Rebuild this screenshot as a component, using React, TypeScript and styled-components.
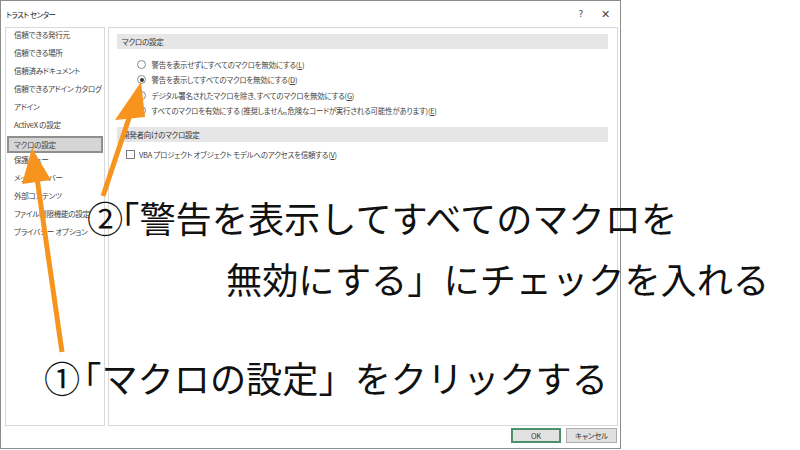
import styled, { createGlobalStyle } from "styled-components";

const GlobalStyle = createGlobalStyle`
	html, body {
		margin: 0;
		padding: 0;
		background: #ffffff;
	}
	#root {
		width: 800px;
		height: 450px;
		overflow: hidden;
	}
`;

const uiFont = `"Noto Sans CJK JP", "Noto Sans", sans-serif`;

const Stage = styled.div`
	position: relative;
	width: 800px;
	height: 450px;
	background: #ffffff;
	font-family: ${uiFont};
`;

const Dialog = styled.div`
	box-sizing: border-box;
	width: 621px;
	height: 449px;
	border: 1px solid #8c8c8c;
	background: #ffffff;
	display: flex;
	flex-direction: column;
	font-size: 7.5px;
	letter-spacing: -0.25px;
	font-feature-settings: "palt";
	color: #333333;
`;

const TitleBar = styled.div`
	flex: none;
	height: 26px;
	display: flex;
	align-items: center;
	padding: 0 10px 0 5px;
	gap: 18px;
	span:first-child {
		flex: 1;
		color: #1a1a1a;
		letter-spacing: -0.5px;
	}
`;

const TitleButton = styled.span`
	font-family: "DejaVu Sans", sans-serif;
	font-size: ${props => props.$size}px;
	color: #444444;
	line-height: 1;
`;

const Body = styled.div`
	flex: none;
	height: 399px;
	display: flex;
	gap: 3px;
	padding: 0 2px 0 4px;
`;

const NavPanel = styled.div`
	box-sizing: border-box;
	width: 100px;
	border: 1px solid #d9d9d9;
	padding: 0 1px;
	display: flex;
	flex-direction: column;
`;

const NavItem = styled.div`
	box-sizing: border-box;
	font-size: 7.6px;
	letter-spacing: -0.3px;
	padding-left: ${props => (props.$selected ? 5 : 7)}px;
	color: #444444;
	white-space: nowrap;
	overflow: hidden;
	background: ${props => (props.$selected ? "#d6d6d6" : "transparent")};
	border: ${props => (props.$selected ? "2px solid #8f8f8f" : "none")};
	line-height: ${props => (props.$selected ? "13px" : "14px")};
	height: ${props => (props.$selected ? "17px" : "18px")};
`;

const ContentPanel = styled.div`
	box-sizing: border-box;
	flex: 1;
	border: 1px solid #d9d9d9;
	padding: 6px 9px 0 8px;
	display: flex;
	flex-direction: column;
`;

const SectionHeader = styled.div`
	height: 15px;
	line-height: 15px;
	background: #e6e6e6;
	padding-left: 5px;
	color: #333333;
	margin-top: ${props => props.$gap || 0}px;
`;

const OptionList = styled.div`
	display: flex;
	flex-direction: column;
	padding-left: ${props => props.$indent}px;
	margin-top: ${props => props.$gap}px;
`;

const OptionRow = styled.label`
	height: 15.5px;
	display: flex;
	align-items: center;
	gap: ${props => props.$gap}px;
	color: #444444;
	white-space: nowrap;
`;

const Radio = styled.span`
	box-sizing: border-box;
	flex: none;
	width: 9px;
	height: 9px;
	border-radius: 50%;
	border: 1px solid #8a8a8a;
	background: #ffffff;
	display: flex;
	align-items: center;
	justify-content: center;
	&::after {
		content: "";
		width: 4px;
		height: 4px;
		border-radius: 50%;
		background: ${props => (props.$checked ? "#333333" : "transparent")};
	}
`;

const CheckBox = styled.span`
	box-sizing: border-box;
	flex: none;
	width: 9px;
	height: 9px;
	border: 1px solid #7a7a7a;
	background: #ffffff;
`;

const Footer = styled.div`
	flex: 1;
	display: flex;
	justify-content: flex-end;
	align-items: flex-start;
	gap: 5px;
	padding: 2px 3px 0 0;
`;

const Button = styled.div`
	box-sizing: border-box;
	width: ${props => props.$width}px;
	height: 15px;
	display: flex;
	align-items: center;
	justify-content: center;
	background: #e1e1e1;
	border: ${props => (props.$primary ? "2px solid #4a9068" : "1px solid #adadad")};
	color: #333333;
`;

const Caption = styled.div`
	position: absolute;
	top: ${props => props.$top}px;
	left: ${props => props.$left}px;
	font-family: "Noto Sans CJK JP", sans-serif;
	font-size: 36.2px;
	line-height: 36px;
	font-weight: 400;
	color: #111111;
	white-space: nowrap;
`;

const OpenBracket = styled.span`
	margin-left: ${props => props.$pull}px;
`;

const ArrowLayer = styled.svg`
	position: absolute;
	inset: 0;
	pointer-events: none;
`;

const navItems = [
	"信頼できる発行元",
	"信頼できる場所",
	"信頼済みドキュメント",
	"信頼できるアドイン カタログ",
	"アドイン",
	"ActiveX の設定",
	"マクロの設定",
	"保護ビュー",
	"メッセージ バー",
	"外部コンテンツ",
	"ファイル制限機能の設定",
	"プライバシー オプション",
];

const macroOptions = [
	{ text: "警告を表示せずにすべてのマクロを無効にする", key: "L" },
	{ text: "警告を表示してすべてのマクロを無効にする", key: "D", checked: true },
	{ text: "デジタル署名されたマクロを除き、すべてのマクロを無効にする", key: "G" },
	{ text: "すべてのマクロを有効にする (推奨しません。危険なコードが実行される可能性があります)", key: "E" },
];

const ORANGE = "#f7941d";

function App() {
	return (
		<Stage>
			<GlobalStyle />
			<Dialog>
				<TitleBar>
					<span>トラスト センター</span>
					<TitleButton $size={9}>?</TitleButton>
					<TitleButton $size={11}>✕</TitleButton>
				</TitleBar>
				<Body>
					<NavPanel>
						{navItems.map((item, index) => (
							<NavItem key={`nav_${index}`} $selected={item === "マクロの設定"}>
								{item}
							</NavItem>
						))}
					</NavPanel>
					<ContentPanel>
						<SectionHeader>マクロの設定</SectionHeader>
						<OptionList $indent={20} $gap={7.5}>
							{macroOptions.map(option => (
								<OptionRow key={option.key} $gap={5.5}>
									<Radio $checked={option.checked} />
									<span>
										{option.text}(<u>{option.key}</u>)
									</span>
								</OptionRow>
							))}
						</OptionList>
						<SectionHeader $gap={8.5}>開発者向けのマクロ設定</SectionHeader>
						<OptionList $indent={8.5} $gap={4.5}>
							<OptionRow $gap={4.5}>
								<CheckBox />
								<span>
									VBA プロジェクト オブジェクト モデルへのアクセスを信頼する(<u>V</u>)
								</span>
							</OptionRow>
						</OptionList>
					</ContentPanel>
				</Body>
				<Footer>
					<Button $primary $width={50}>OK</Button>
					<Button $width={51}>キャンセル</Button>
				</Footer>
			</Dialog>

			<ArrowLayer width="800" height="450" viewBox="0 0 800 450">
				<line x1="62" y1="352" x2="37" y2="178" stroke={ORANGE} strokeWidth="5" />
				<polygon points="32,148 22,184 51,180" fill={ORANGE} />
				<line x1="103" y1="196" x2="131" y2="112" stroke={ORANGE} strokeWidth="5" />
				<polygon points="141,82 115,120 145,117" fill={ORANGE} />
			</ArrowLayer>

			<Caption $top={199} $left={87}>
				②<OpenBracket $pull={-20}>「</OpenBracket>警告を表示してすべてのマクロを
			</Caption>
			<Caption $top={260} $left={226}>無効にする」にチェックを入れる</Caption>
			<Caption $top={359} $left={44}>
				①<OpenBracket $pull={-15}>「</OpenBracket>マクロの設定」をクリックする
			</Caption>
		</Stage>
	);
}

export default App;
